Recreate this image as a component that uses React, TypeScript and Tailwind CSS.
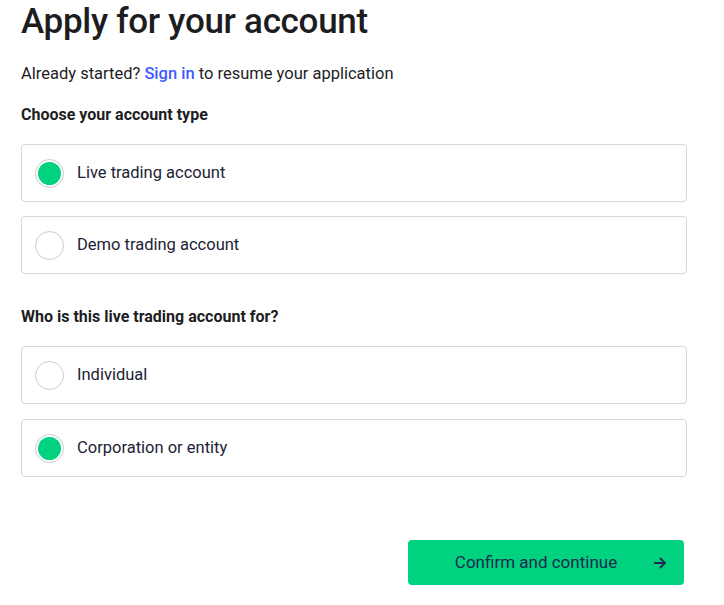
import React, { useState } from "react";

function Radio({ checked }: { checked: boolean }) {
  return (
    <span className="flex h-[29px] w-[29px] shrink-0 items-center justify-center rounded-full border border-[#c8cbd0] bg-white">
      {checked && <span className="h-[23px] w-[23px] rounded-full bg-[#00d27f]" />}
    </span>
  );
}

function Option({ label, checked, onClick }: { label: string; checked: boolean; onClick: () => void }) {
  return (
    <button
      type="button"
      onClick={onClick}
      className="flex h-[58px] w-full items-center gap-[13px] rounded-[4px] border border-[#d3d7e0] bg-white pl-[13px] text-left text-[16.5px] text-[#1c2333]"
    >
      <Radio checked={checked} />
      <span>{label}</span>
    </button>
  );
}

export default function App() {
  const [type, setType] = useState("live");
  const [who, setWho] = useState("corp");
  return (
    <div
      className="min-h-[605px] w-[724px] bg-white pl-[21px] pr-[37px] text-[#1a1a1a]"
      style={{ fontFamily: "Roboto, 'Liberation Sans', sans-serif" }}
    >
      <h1 className="text-[35px] leading-[44px] font-medium tracking-[-0.3px] text-[#1d1d1f]">Apply for your account</h1>
      <p className="mt-[18px] text-[16.5px] leading-[24px] text-[#1d1d1f]">
        Already started? <a className="font-medium text-[#3d5afe]">Sign in</a> to resume your application
      </p>
      <h2 className="mt-[17px] text-[16px] leading-[24px] font-bold text-[#1d1d1f]">Choose your account type</h2>
      <div className="mt-[17px] flex flex-col gap-[14px]">
        <Option label="Live trading account" checked={type === "live"} onClick={() => setType("live")} />
        <Option label="Demo trading account" checked={type === "demo"} onClick={() => setType("demo")} />
      </div>
      <h2 className="mt-[31px] text-[16px] leading-[24px] font-bold text-[#1d1d1f]">Who is this live trading account for?</h2>
      <div className="mt-[17px] flex flex-col gap-[15px]">
        <Option label="Individual" checked={who === "ind"} onClick={() => setWho("ind")} />
        <Option label="Corporation or entity" checked={who === "corp"} onClick={() => setWho("corp")} />
      </div>
      <div className="mt-[63px] flex justify-end pr-[3px]">
        <button
          type="button"
          className="relative flex h-[45px] w-[276px] items-center justify-center rounded-[4px] bg-[#00d27f] text-[17px] text-[#1b2a4e]"
        >
          <span className="pr-[20px]">Confirm and continue</span>
          <svg
            className="absolute right-[17px] top-1/2 -translate-y-1/2"
            width="14"
            height="14"
            viewBox="0 0 14 14"
            fill="none"
            stroke="#1b2a4e"
            strokeWidth="1.8"
          >
            <path d="M1 7h11M7 2l5 5-5 5" />
          </svg>
        </button>
      </div>
    </div>
  );
}
